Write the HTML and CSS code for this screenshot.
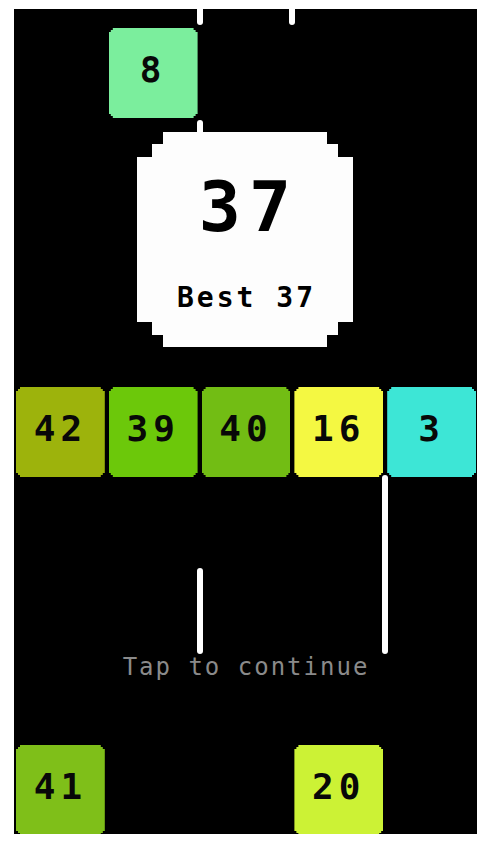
FILE: index.html
```html
<!DOCTYPE html>
<html lang="en">
  <head>
    <meta charset="UTF-8" />
    <title>Stack Drop</title>
    <link rel="stylesheet" href="styles.css">
  </head>
  <body>
    <div class="board">
      <div class="lanes">
        <div class="lane">
          <div class="tile olive" style="top: 378px;">42</div>
          <div class="tile grass" style="top: 736px;">41</div>
        </div>
        <div class="lane">
          <div class="tile mint" style="top: 19px;">8</div>
          <div class="tile green" style="top: 378px;">39</div>
        </div>
        <div class="lane">
          <div class="tile leaf" style="top: 378px;">40</div>
        </div>
        <div class="lane">
          <div class="tile lemon" style="top: 378px;">16</div>
          <div class="tile lime" style="top: 736px;">20</div>
        </div>
        <div class="lane">
          <div class="tile aqua" style="top: 378px;">3</div>
        </div>
      </div>

      <!-- falling needles, placed on lane edges -->
      <span class="rail" style="left: 40%; top: -8px; height: 24px;"></span>
      <span class="rail" style="left: 60%; top: -8px; height: 24px;"></span>
      <span class="rail" style="left: 40%; top: 111px; height: 40px;"></span>
      <span class="rail" style="left: 40%; top: 559px; height: 86px;"></span>
      <span class="rail" style="left: 80%; top: 466px; height: 179px;"></span>

      <div class="result">
        <div class="score">37</div>
        <div class="best">Best 37</div>
      </div>

      <p class="hint">Tap to continue</p>
    </div>
  </body>
</html>
```

FILE: styles.css
```css
html {
  height: 100%;
}

body {
  margin: 9px 14px;
  background: #fff;
  font-family: "DejaVu Sans Mono", "Liberation Mono", monospace;
}

.board {
  position: relative;
  width: 464px;
  height: 825px;
  background: #000;
  overflow: hidden;
}

.lanes {
  display: grid;
  grid-template-columns: repeat(5, 1fr);
  height: 100%;
}

.lane {
  position: relative;
}

.tile {
  position: absolute;
  left: 2px;
  right: 2px;
  height: 90px;
  display: flex;
  align-items: center;
  justify-content: center;
  padding-bottom: 6px;
  box-sizing: border-box;
  font-size: 36px;
  font-weight: bold;
  line-height: 1;
  letter-spacing: 5px;
  color: #080808;
  clip-path: polygon(
    4px 0, calc(100% - 4px) 0, calc(100% - 4px) 2px, calc(100% - 2px) 2px,
    calc(100% - 2px) 4px, 100% 4px, 100% calc(100% - 4px),
    calc(100% - 2px) calc(100% - 4px), calc(100% - 2px) calc(100% - 2px),
    calc(100% - 4px) calc(100% - 2px), calc(100% - 4px) 100%, 4px 100%,
    4px calc(100% - 2px), 2px calc(100% - 2px), 2px calc(100% - 4px),
    0 calc(100% - 4px), 0 4px, 2px 4px, 2px 2px, 4px 2px
  );
}

.mint  { background: #7bee9d; }
.olive { background: #9db30c; }
.green { background: #6cc80a; }
.leaf  { background: #72bd14; }
.lemon { background: #f4f842; }
.aqua  { background: #3de6d6; }
.grass { background: #7fbf19; }
.lime  { background: #ccf235; }

.rail {
  position: absolute;
  width: 6px;
  margin-left: -3px;
  background: #fff;
  border-radius: 3px;
}

/* score card with stepped pixel corners */
.result {
  position: absolute;
  top: 123px;
  left: 50%;
  width: 216px;
  height: 215px;
  margin-left: -109px;
  display: flex;
  flex-direction: column;
  align-items: center;
  padding-top: 40px;
  box-sizing: border-box;
  background: #fdfdfd;
  color: #000;
  font-weight: bold;
  line-height: 1;
  clip-path: polygon(
    26px 0, calc(100% - 26px) 0, calc(100% - 26px) 12px, calc(100% - 15px) 12px,
    calc(100% - 15px) 25px, 100% 25px, 100% calc(100% - 25px),
    calc(100% - 15px) calc(100% - 25px), calc(100% - 15px) calc(100% - 12px),
    calc(100% - 26px) calc(100% - 12px), calc(100% - 26px) 100%, 26px 100%,
    26px calc(100% - 12px), 15px calc(100% - 12px), 15px calc(100% - 25px),
    0 calc(100% - 25px), 0 25px, 15px 25px, 15px 12px, 26px 12px
  );
}

.score {
  font-size: 70px;
  letter-spacing: 8px;
  padding-left: 8px;
}

.best {
  margin-top: 42px;
  font-size: 28px;
  letter-spacing: 3px;
  padding-left: 3px;
}

.hint {
  position: absolute;
  top: 646px;
  left: 0;
  right: 0;
  margin: 0;
  text-align: center;
  font-size: 24px;
  line-height: 1;
  letter-spacing: 2px;
  color: #8a8a8a;
}
```
